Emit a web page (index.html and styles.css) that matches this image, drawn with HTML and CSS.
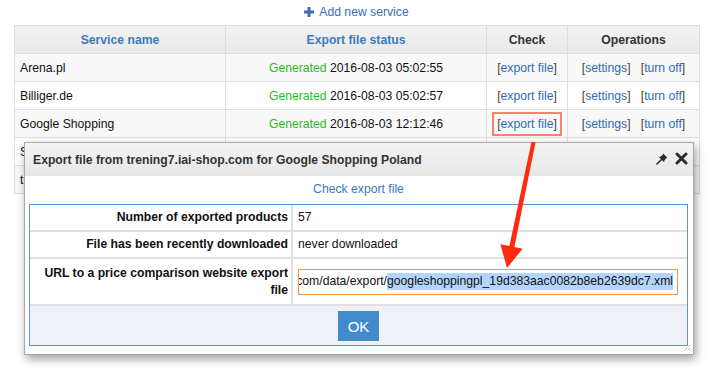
FILE: index.html
```html
<!DOCTYPE html>
<html lang="en">
<head>
    <meta charset="UTF-8">
    <title>Price comparison services</title>
    <link rel="stylesheet" href="styles.css">
</head>
<body>

    <div class="page">
        <div class="toolbar">
            <a href="#" class="add-link">
                <svg class="plus" width="10" height="10" viewBox="0 0 10 10"><path d="M3.5 0h3v3.5H10v3H6.5V10h-3V6.5H0v-3h3.5z" fill="#3a70b4"/></svg>
                Add new service
            </a>
        </div>

        <table class="services">
            <colgroup>
                <col style="width: 211px">
                <col style="width: 261px">
                <col style="width: 81px">
                <col style="width: 132px">
            </colgroup>
            <thead>
                <tr>
                    <th class="sortable">Service name</th>
                    <th class="sortable">Export file status</th>
                    <th>Check</th>
                    <th>Operations</th>
                </tr>
            </thead>
            <tbody>
                <tr>
                    <td>Arena.pl</td>
                    <td class="status"><span class="ok">Generated</span> 2016-08-03 05:02:55</td>
                    <td class="center"><span class="br">[</span><a href="#">export file</a><span class="br">]</span></td>
                    <td class="center"><span class="br">[</span><a href="#">settings</a><span class="br">]</span>&nbsp;&nbsp; <span class="br">[</span><a href="#">turn off</a><span class="br">]</span></td>
                </tr>
                <tr>
                    <td>Billiger.de</td>
                    <td class="status"><span class="ok">Generated</span> 2016-08-03 05:02:57</td>
                    <td class="center"><span class="br">[</span><a href="#">export file</a><span class="br">]</span></td>
                    <td class="center"><span class="br">[</span><a href="#">settings</a><span class="br">]</span>&nbsp;&nbsp; <span class="br">[</span><a href="#">turn off</a><span class="br">]</span></td>
                </tr>
                <tr>
                    <td>Google Shopping</td>
                    <td class="status"><span class="ok">Generated</span> 2016-08-03 12:12:46</td>
                    <td class="center"><span class="marked"><span class="br">[</span><a href="#">export file</a><span class="br">]</span></span></td>
                    <td class="center"><span class="br">[</span><a href="#">settings</a><span class="br">]</span>&nbsp;&nbsp; <span class="br">[</span><a href="#">turn off</a><span class="br">]</span></td>
                </tr>
                <tr>
                    <td>Skąpiec.pl</td>
                    <td class="status"><span class="ok">Generated</span> 2016-08-03 05:03:01</td>
                    <td class="center"><span class="br">[</span><a href="#">export file</a><span class="br">]</span></td>
                    <td class="center"><span class="br">[</span><a href="#">settings</a><span class="br">]</span>&nbsp;&nbsp; <span class="br">[</span><a href="#">turn off</a><span class="br">]</span></td>
                </tr>
                <tr>
                    <td>tanio.pl</td>
                    <td class="status"><span class="ok">Generated</span> 2016-08-03 05:03:04</td>
                    <td class="center"><span class="br">[</span><a href="#">export file</a><span class="br">]</span></td>
                    <td class="center"><span class="br">[</span><a href="#">settings</a><span class="br">]</span>&nbsp;&nbsp; <span class="br">[</span><a href="#">turn off</a><span class="br">]</span></td>
                </tr>
            </tbody>
        </table>
    </div>

    <div class="dialog">
        <div class="dialog-title">
            <span>Export file from trening7.iai-shop.com for Google Shopping Poland</span>
            <div class="dialog-icons">
                <svg width="12" height="12" viewBox="0 0 12 12"><path d="M7.2 0.6 L11.4 4.8 L10.1 5.3 L8.1 8 L8.4 9.6 L2.4 3.6 L4 3.9 L6.7 1.9 Z" fill="#2b2b2b"/><path d="M5.2 6.8 L1 11" stroke="#2b2b2b" stroke-width="1.6" stroke-linecap="round"/></svg>
                <svg width="13" height="13" viewBox="0 0 13 13"><path d="M2 2 L11 11 M11 2 L2 11" stroke="#2b2b2b" stroke-width="3" stroke-linecap="round"/></svg>
            </div>
        </div>
        <div class="dialog-body">
            <a href="#" class="check-link">Check export file</a>
            <div class="details">
                <table class="info">
                    <tr class="short">
                        <th>Number of exported products</th>
                        <td>57</td>
                    </tr>
                    <tr class="short">
                        <th>File has been recently downloaded</th>
                        <td>never downloaded</td>
                    </tr>
                    <tr class="tall">
                        <th>URL to a price comparison website export file</th>
                        <td>
                            <div class="url-field">
                                <span>http://trening7.iai-shop.com/data/export/</span><span class="selected">googleshoppingpl_19d383aac0082b8eb2639dc7.xml</span>
                            </div>
                        </td>
                    </tr>
                </table>
                <div class="details-foot">
                    <button class="ok-btn">OK</button>
                </div>
            </div>
        </div>
        <svg class="grip" width="8" height="8" viewBox="0 0 8 8"><path d="M7 1 L1 7 M7 4 L4 7 M7 6.5 L6.5 7" stroke="#7f9db9" stroke-width="1" stroke-dasharray="1 1"/></svg>
    </div>

    <svg class="arrow" width="713" height="375" viewBox="0 0 713 375">
        <polygon points="531.5,141.7 535.5,142.5 514.4,247 522.6,248.8 507,268 500.4,244.2 509.4,246" fill="#ff2a10"/>
    </svg>

</body>
</html>
```

FILE: styles.css
```css
body {
    margin: 0;
    font-family: "Liberation Sans", Arial, sans-serif;
    font-size: 12.2px;
    color: #111;
    background: #fff;
}
a {
    color: #2f6bb3;
    text-decoration: none;
}
.page {
    padding: 0 14px;
}
.toolbar {
    height: 25px;
    display: flex;
    justify-content: center;
    align-items: center;
    padding-bottom: 1px;
    box-sizing: border-box;
}
.add-link {
    display: flex;
    align-items: center;
    gap: 5px;
    color: #3a6fb2;
}
.services {
    width: 685px;
    table-layout: fixed;
    border-collapse: collapse;
    border: 1px solid #dadada;
}
.services th,
.services td {
    height: 28px;
    padding: 0 5px;
    border: 1px solid #dedede;
    white-space: nowrap;
    box-sizing: border-box;
}
.services th {
    background: linear-gradient(#f2f2f2, #e9e9e9);
    font-weight: bold;
    color: #333;
}
.services th.sortable {
    color: #3b7bbf;
}
.services tbody tr:nth-child(odd) td {
    background: #f8f8f8;
}
.status,
.center {
    text-align: center;
}
.ok {
    color: #1fbf1f;
}
.br {
    color: #5a3a20;
}
.marked {
    outline: 2px solid #f4826f;
    outline-offset: 3px;
}

.dialog {
    position: absolute;
    left: 24px;
    top: 142px;
    width: 670px;
    height: 213px;
    box-sizing: border-box;
    border: 1px solid #a8a8a8;
    background: #fff;
    box-shadow: 2px 4px 9px rgba(0, 0, 0, 0.38);
}
.dialog-title {
    height: 33px;
    display: flex;
    align-items: center;
    justify-content: space-between;
    padding: 0 5px 0 8px;
    background: linear-gradient(#f4f4f4, #e6e6e6);
    font-weight: bold;
    color: #333;
}
.dialog-icons {
    display: flex;
    align-items: center;
    gap: 7px;
    padding-bottom: 2px;
}
.dialog-body {
    padding: 6px 5px 0 4px;
    text-align: center;
}
.check-link {
    display: inline-block;
    line-height: 15px;
    color: #3a78c0;
}
.details {
    margin-top: 7px;
    border: 1px solid #5d95cd;
}
.info {
    width: 100%;
    border-collapse: collapse;
}
.info th,
.info td {
    line-height: 17px;
    padding: 0;
    box-sizing: border-box;
}
.info .short th,
.info .short td {
    height: 26px;
}
.info .short + .short th,
.info .short + .short td {
    height: 27px;
}
.info .tall th,
.info .tall td {
    height: 46px;
}
.info tr + tr th,
.info tr + tr td {
    border-top: 2px solid #e0e0e0;
}
.info th {
    width: 262px;
    padding: 0 3px 0 12px;
    text-align: right;
    border-right: 2px solid #e0e0e0;
    color: #111;
}
.info td {
    text-align: left;
    padding-left: 5px;
}
.url-field {
    width: 380px;
    height: 26px;
    box-sizing: border-box;
    border: 1px solid #f09a45;
    display: flex;
    justify-content: flex-end;
    align-items: center;
    overflow: hidden;
    white-space: nowrap;
    padding-right: 4px;
}
.url-field span {
    flex-shrink: 0;
}
.selected {
    background: #b3d4fc;
}
.details-foot {
    border-top: 2px solid #e0e0e0;
    background: #eef2f8;
    padding: 5px 0 4px;
    display: flex;
    justify-content: center;
}
.ok-btn {
    width: 41px;
    height: 30px;
    border: none;
    background: #428bca;
    color: #fff;
    font-family: "Liberation Sans", Arial, sans-serif;
    font-size: 15px;
    padding: 0;
}
.grip {
    position: absolute;
    right: 2px;
    bottom: 2px;
}
.arrow {
    position: absolute;
    left: 0;
    top: 0;
    pointer-events: none;
}
```
